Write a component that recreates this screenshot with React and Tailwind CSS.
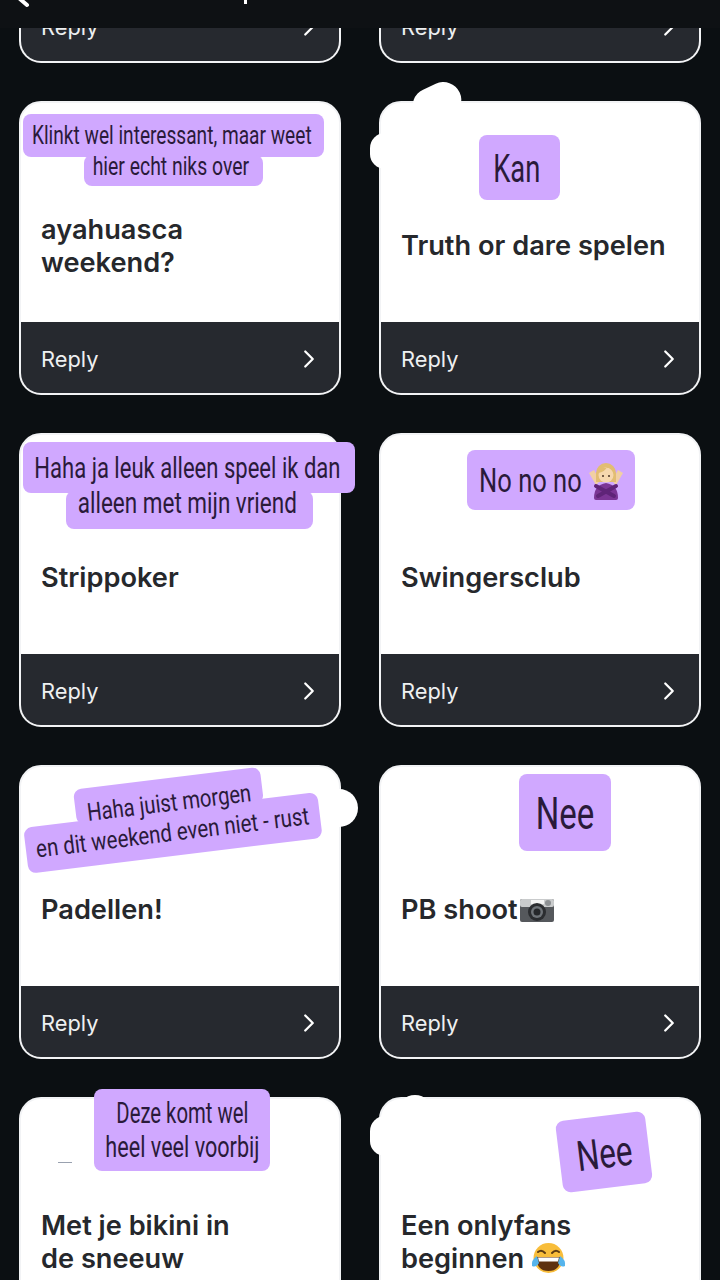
import React from 'react';
import { ChevronRight } from 'lucide-react';

const WomanNo = () => (
  <svg width="34" height="40" viewBox="0 0 34 40" className="shrink-0">
    <path d="M0 13 L5 10 L11 21 L7 25 Z" fill="#f1cfa4" />
    <path d="M34 13 L29 10 L23 21 L27 25 Z" fill="#f1cfa4" />
    <path d="M7 13 a10 10 0 0 1 20 0 v9 h-20 Z" fill="#e2bd72" />
    <circle cx="17" cy="15" r="7.500" fill="#f6d7ae" />
    <path d="M9 13 q7 -1 9 -6 q4 1 7 6 v-5 h-16 Z" fill="#e2bd72" />
    <circle cx="14" cy="16" r="1" fill="#4a3324" />
    <circle cx="20" cy="16" r="1" fill="#4a3324" />
    <path d="M5 38 q0 -13 12 -15 q12 2 12 15 q0 2 -2 2 h-20 q-2 0 -2 -2 Z" fill="#7b3595" />
    <path d="M7 26 L25 36 M27 26 L9 36" stroke="#5f2478" strokeWidth="4" strokeLinecap="round" />
  </svg>
);

const Camera = () => (
  <svg width="36" height="26" viewBox="0 0 36 26" className="ml-[1px] shrink-0">
    <rect x="1" y="2" width="34" height="23" rx="2" fill="#55585c" />
    <rect x="1" y="2" width="34" height="8" rx="2" fill="#c9cbcc" />
    <rect x="12" y="3" width="13" height="4" fill="#f4f4f4" />
    <circle cx="29" cy="6" r="3" fill="#8d9093" />
    <circle cx="18" cy="15" r="9" fill="#2b2d30" />
    <circle cx="18" cy="15" r="6" fill="#6e7378" />
    <circle cx="18" cy="15" r="3.500" fill="#25272a" />
  </svg>
);

const Laughing = () => (
  <svg width="35" height="32" viewBox="0 0 35 32" className="shrink-0">
    <circle cx="17.500" cy="16" r="15" fill="#f8bd3a" />
    <path d="M7 10 q3.500 -3 7 1 M21 11 q3.500 -4 7 -1" fill="none" stroke="#5e3c12" strokeWidth="2" strokeLinecap="round" />
    <path d="M5.500 15 h24 q0 14 -12 14 q-12 0 -12 -14 Z" fill="#5e3210" />
    <path d="M7 15.500 h21 l-1 4 h-19 Z" fill="#fff" />
    <path d="M6 14 q-6 4 -5 10 q4 2 7 -3 Z" fill="#55b4ec" />
    <path d="M29 14 q6 4 5 10 q-4 2 -7 -3 Z" fill="#55b4ec" />
  </svg>
);

// Squeezed text: the installed families have no condensed cut
const Narrow = ({ text, squeeze }) => (
  <span className={`inline-block whitespace-nowrap font-[Roboto,sans-serif] ${squeeze}`}>{text}</span>
);

// One text line on the purple label; labels stack these to get the stepped outline
const StickerLine = ({ box, size, squeeze, text }) => (
  <div className={`flex items-center justify-center rounded-lg bg-[#d0a8ff] text-[#2a1a3a] ${box} ${size}`}>
    <Narrow text={text} squeeze={squeeze} />
  </div>
);

const Card = ({ title, emoji, children }) => (
  <div className="relative flex h-[294px] flex-col rounded-[22px] border-2 border-[#f2f3f5] bg-white">
    <div className="flex flex-1 items-center pl-[20px] pr-4 pt-[66px]">
      <p className="font-[Inter,sans-serif] text-[27.2px] font-semibold leading-[33px] text-[#26282c]">
        {title}
        {emoji}
      </p>
    </div>
    <div className="flex h-[71px] items-center justify-between rounded-b-[20px] bg-[#26292f] pl-[20px] pr-[15px] pt-[3px]">
      <span className="font-[Inter,sans-serif] text-[21.8px] text-[#eef0f1]">Reply</span>
      <ChevronRight size={30} strokeWidth={1.8} className="text-white" />
    </div>
    {children}
  </div>
);

export default function App() {
  return (
    <div className="h-[1280px] w-[720px] overflow-hidden bg-[#0b0f12]">
      {/* Top bar, scrolled almost out of view */}
      <div className="relative z-10 h-[28px] overflow-hidden bg-[#0e1114]">
        <svg width="40" height="10" viewBox="0 0 40 10" className="absolute left-[10px] top-0">
          <path d="M10 -1 L17 5" fill="none" stroke="#fff" strokeWidth="4" strokeLinecap="round" />
        </svg>
        <div className="absolute left-[244px] top-0 h-[4px] w-[3px] bg-white" />
      </div>

      <div className="-mt-[259px] grid grid-cols-2 gap-x-[38px] gap-y-[38px] px-[19px]">
        <Card title="Iets anders" />
        <Card title="Iets anders" />

        <Card title={<>ayahuasca<br />weekend?</>}>
          <div className="absolute left-[2px] top-[11px] flex flex-col items-center">
            <StickerLine box="h-[43px] w-[301px] pr-[3px] pt-[1px]" size="text-[25px]" squeeze="scale-x-[.765]" text="Klinkt wel interessant, maar weet" />
            <StickerLine box="-mt-[2px] h-[31px] w-[179px] pb-[8px] pr-[5px]" size="text-[25px]" squeeze="scale-x-[.775]" text="hier echt niks over" />
          </div>
        </Card>
        <Card title="Truth or dare spelen">
          <div className="absolute -top-[18px] left-[31px] h-[36px] w-[50px] -rotate-[25deg] rounded-full bg-white" />
          <div className="absolute left-[-11px] top-[30px] h-[36px] w-[30px] rounded-full bg-white" />
          <div className="absolute left-[98px] top-[32px]">
            <StickerLine box="h-[65px] w-[81px] pr-[6px] pt-[4px]" size="text-[38px]" squeeze="scale-x-[.72]" text="Kan" />
          </div>
        </Card>

        <Card title="Strippoker">
          <div className="absolute left-[2px] top-[7px] flex flex-col items-center">
            <StickerLine box="h-[51px] w-[332px] pr-[4px] pt-[2px]" size="text-[29px]" squeeze="scale-x-[.76]" text="Haha ja leuk alleen speel ik dan" />
            <StickerLine box="-mt-[2px] h-[38px] w-[247px] pb-[13px] pr-[4px]" size="text-[29px]" squeeze="scale-x-[.775]" text="alleen met mijn vriend" />
          </div>
        </Card>
        <Card title="Swingersclub">
          <div className="absolute left-[86px] top-[15px]">
            <div className="flex h-[60px] w-[168px] items-center rounded-lg bg-[#d0a8ff] pl-[13px] text-[34px] text-[#2a1a3a]">
              <div className="flex w-[100px] justify-center">
                <Narrow text="No no no" squeeze="scale-x-[.75]" />
              </div>
              <div className="ml-[9px]"><WomanNo /></div>
            </div>
          </div>
        </Card>

        <Card title="Padellen!">
          <div className="absolute left-[297px] top-[22px] h-[38px] w-[40px] rounded-full bg-white" />
          <div className="absolute left-[2px] top-[11px] flex -rotate-[7deg] flex-col items-center">
            <StickerLine box="h-[36px] w-[188px] pt-[14px]" size="text-[25px]" squeeze="scale-x-[.81]" text="Haha juist morgen" />
            <StickerLine box="-mt-[4px] h-[46px] w-[296px]" size="text-[25px]" squeeze="scale-x-[.82]" text="en dit weekend even niet - rust" />
          </div>
        </Card>
        <Card title="PB shoot" emoji={<span className="inline-block align-[-4px]"><Camera /></span>}>
          <div className="absolute left-[138px] top-[7px]">
            <StickerLine box="h-[77px] w-[92px] pt-[2px]" size="text-[44px]" squeeze="scale-x-[.75]" text="Nee" />
          </div>
        </Card>

        <Card title={<>Met je bikini in<br />de sneeuw</>}>
          <div className="absolute left-[37px] top-[63px] h-[1px] w-[14px] bg-gray-400" />
          <div className="absolute left-[73px] -top-[10px] flex h-[82px] w-[176px] flex-col items-center justify-center rounded-lg bg-[#d0a8ff] pb-[1px] text-[29px] leading-[34px] text-[#2a1a3a]">
            <Narrow text="Deze komt wel" squeeze="scale-x-[.7]" />
            <Narrow text="heel veel voorbij" squeeze="scale-x-[.745]" />
          </div>
        </Card>
        <Card title={<>Een onlyfans<br />beginnen </>} emoji={<span className="inline-block align-[-6px]"><Laughing /></span>}>
          <div className="absolute -top-[4px] left-[16px] h-[36px] w-[36px] rounded-full bg-white" />
          <div className="absolute left-[-11px] top-[17px] h-[40px] w-[30px] rounded-full bg-white" />
          <div className="absolute left-[178px] top-[17px] -rotate-[7deg]">
            <StickerLine box="h-[72px] w-[90px] pt-[2px]" size="text-[42px]" squeeze="scale-x-[.75]" text="Nee" />
          </div>
        </Card>
      </div>
    </div>
  );
}
